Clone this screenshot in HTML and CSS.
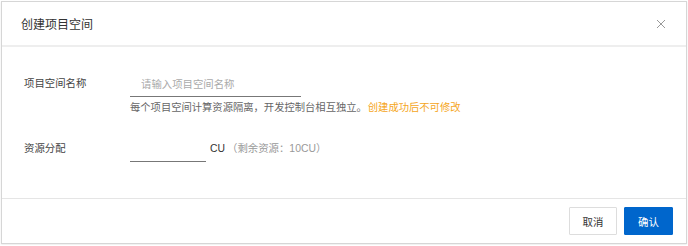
FILE: index.html
```html
<!DOCTYPE html>
<html lang="zh-CN">
<head>
 <meta charset="UTF-8">
 <title>创建项目空间</title>
 <link rel="stylesheet" href="styles.css">
</head>
<body>
<div class="modal">
 <div class="modal-header">
  <span class="modal-title">创建项目空间</span>
  <span class="modal-close">
   <svg width="10" height="10" viewBox="0 0 10 10"><path d="M1 1L9 9M9 1L1 9" stroke="#999" stroke-width="1" fill="none"/></svg>
  </span>
 </div>
 <div class="modal-body">
  <div class="form-row">
   <label class="form-label">项目空间名称</label>
   <div class="form-field">
    <input class="line-input name-input" type="text" placeholder="请输入项目空间名称">
    <div class="form-help">每个项目空间计算资源隔离，开发控制台相互独立。<span class="warn">创建成功后不可修改</span></div>
   </div>
  </div>
  <div class="form-row second">
   <label class="form-label">资源分配</label>
   <div class="form-field inline">
    <input class="line-input cu-input" type="text">
    <span class="unit">CU</span>
    <span class="remain">（剩余资源：10CU）</span>
   </div>
  </div>
 </div>
 <div class="modal-footer">
  <button class="btn btn-cancel">取消</button>
  <button class="btn btn-primary">确认</button>
 </div>
</div>
</body>
</html>
```

FILE: styles.css
```css
* {
    margin: 0;
    padding: 0;
    box-sizing: border-box;
    font-family: "Liberation Sans", "Noto Sans CJK SC", sans-serif;
}
body {
    background: #fff;
    padding: 1px;
}
.modal {
    width: 686px;
    height: 243px;
    border: 1px solid #d6d6d6;
    background: #fff;
    display: flex;
    flex-direction: column;
    box-shadow: 0 1px 2px rgba(0, 0, 0, 0.08);
}
.modal-header {
    height: 45px;
    padding: 0 20px 0 19px;
    display: flex;
    align-items: center;
    justify-content: space-between;
    border-bottom: 2px solid #eeeeee;
}
.modal-title {
    font-size: 12px;
    color: #333;
}
.modal-close {
    display: flex;
    margin-top: 1px;
}
.modal-body {
    flex: 1;
    padding: 25px 0 0 22px;
}
.form-row {
    display: flex;
    align-items: flex-start;
}
.form-row.second {
    margin-top: 22px;
}
.form-label {
    width: 106px;
    font-size: 10.4px;
    color: #444;
    line-height: 24px;
}
.line-input {
    height: 25px;
    border: none;
    border-bottom: 1px solid #777;
    outline: none;
    font-size: 10.4px;
    color: #333;
    background: transparent;
    padding: 0 11px;
}
.line-input::placeholder {
    color: #aaa;
}
.name-input {
    width: 171px;
    display: block;
}
.cu-input {
    width: 76px;
}
.form-help {
    margin-top: 4px;
    font-size: 10.3px;
    line-height: 14px;
    color: #666;
}
.warn {
    color: #f5a623;
    margin-left: 1px;
}
.form-field.inline {
    display: flex;
    align-items: flex-start;
}
.unit {
    font-size: 10.4px;
    color: #333;
    line-height: 24px;
    margin-left: 4px;
}
.remain {
    font-size: 10.4px;
    color: #999;
    line-height: 24px;
    margin-left: 2px;
}
.modal-footer {
    height: 45px;
    border-top: 1px solid #e5e5e5;
    display: flex;
    align-items: center;
    justify-content: flex-end;
    gap: 7px;
    padding-right: 13px;
}
.btn {
    height: 28px;
    width: 48px;
    font-size: 10.4px;
    border-radius: 1px;
    cursor: pointer;
}
.btn-cancel {
    background: #fff;
    border: 1px solid #ddd;
    color: #333;
}
.btn-primary {
    background: #0066cc;
    border: 1px solid #0066cc;
    color: #fff;
    width: 49px;
}
```
